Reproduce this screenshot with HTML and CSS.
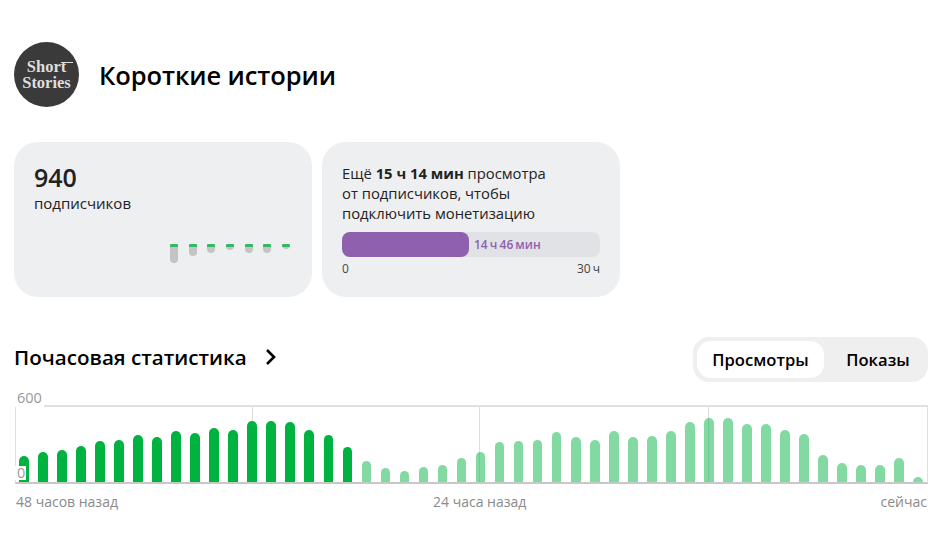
FILE: index.html
```html
<!DOCTYPE html>
<html lang="ru">
    <head>
        <title>Короткие истории</title>
        <meta charset="UTF-8">
        <link rel="stylesheet" href="styles.css">
    </head>
    <body>
        <div class="channel">
            <div class="logo"><span>Short</span><span>Stories</span></div>
            <h1>Короткие истории</h1>
        </div>

        <div class="cards">
            <div class="card subs">
                <div class="subs-count">940</div>
                <div class="subs-label">подписчиков</div>
                <div class="spark">
                    <div class="spark-bar" style="height: 19px"></div>
                    <div class="spark-bar" style="height: 12px"></div>
                    <div class="spark-bar" style="height: 9px"></div>
                    <div class="spark-bar" style="height: 6px"></div>
                    <div class="spark-bar" style="height: 9px"></div>
                    <div class="spark-bar" style="height: 9px"></div>
                    <div class="spark-bar" style="height: 5px"></div>
                </div>
            </div>
            <div class="card money">
                <p>Ещё <b>15 ч 14 мин</b> просмотра<br>от подписчиков, чтобы<br>подключить монетизацию</p>
                <div class="progress">
                    <div class="progress-fill" style="width: 127px"></div>
                    <span>14 ч 46 мин</span>
                </div>
                <div class="progress-scale"><span>0</span><span>30 ч</span></div>
            </div>
        </div>

        <div class="stats-head">
            <h2>Почасовая статистика
                <svg width="12" height="18" viewBox="0 0 12 18"><path d="M2 2l7 7-7 7" fill="none" stroke="#000" stroke-width="2.6"/></svg>
            </h2>
            <div class="tabs">
                <div class="tab active">Просмотры</div>
                <div class="tab">Показы</div>
            </div>
        </div>

        <div class="chart">
            <span class="y-label y-top">600</span>
            <span class="y-label y-zero">0</span>
            <i class="grid g1"></i><i class="grid g2"></i><i class="grid g3"></i>
            <div class="bars">
                <div class="bar" style="height: 26px"></div>
                <div class="bar" style="height: 30px"></div>
                <div class="bar" style="height: 32px"></div>
                <div class="bar" style="height: 36px"></div>
                <div class="bar" style="height: 41px"></div>
                <div class="bar" style="height: 42px"></div>
                <div class="bar" style="height: 47px"></div>
                <div class="bar" style="height: 45px"></div>
                <div class="bar" style="height: 51px"></div>
                <div class="bar" style="height: 49px"></div>
                <div class="bar" style="height: 54px"></div>
                <div class="bar" style="height: 52px"></div>
                <div class="bar" style="height: 61px"></div>
                <div class="bar" style="height: 61px"></div>
                <div class="bar" style="height: 60px"></div>
                <div class="bar" style="height: 52px"></div>
                <div class="bar" style="height: 47px"></div>
                <div class="bar" style="height: 35px"></div>
                <div class="bar light" style="height: 21px"></div>
                <div class="bar light" style="height: 14px"></div>
                <div class="bar light" style="height: 11px"></div>
                <div class="bar light" style="height: 15px"></div>
                <div class="bar light" style="height: 17px"></div>
                <div class="bar light" style="height: 24px"></div>
                <div class="bar light" style="height: 30px"></div>
                <div class="bar light" style="height: 40px"></div>
                <div class="bar light" style="height: 41px"></div>
                <div class="bar light" style="height: 42px"></div>
                <div class="bar light" style="height: 50px"></div>
                <div class="bar light" style="height: 45px"></div>
                <div class="bar light" style="height: 42px"></div>
                <div class="bar light" style="height: 51px"></div>
                <div class="bar light" style="height: 45px"></div>
                <div class="bar light" style="height: 46px"></div>
                <div class="bar light" style="height: 51px"></div>
                <div class="bar light" style="height: 60px"></div>
                <div class="bar light" style="height: 64px"></div>
                <div class="bar light" style="height: 64px"></div>
                <div class="bar light" style="height: 58px"></div>
                <div class="bar light" style="height: 58px"></div>
                <div class="bar light" style="height: 52px"></div>
                <div class="bar light" style="height: 48px"></div>
                <div class="bar light" style="height: 27px"></div>
                <div class="bar light" style="height: 19px"></div>
                <div class="bar light" style="height: 17px"></div>
                <div class="bar light" style="height: 17px"></div>
                <div class="bar light" style="height: 24px"></div>
                <div class="bar light" style="height: 5px"></div>
            </div>
        </div>
        <div class="x-labels">
            <span>48 часов назад</span>
            <span>24 часа назад</span>
            <span>сейчас</span>
        </div>
    </body>
</html>
```

FILE: styles.css
```css
body {
    margin: 0;
    padding: 42px 22px 0 14px;
    background: #fff;
    color: #000;
    font-family: "Open Sans", "Noto Sans", sans-serif;
}
.channel {
    display: flex;
    align-items: center;
    gap: 20px;
    height: 65px;
}
.logo {
    position: relative;
    width: 65px;
    height: 65px;
    border-radius: 50%;
    background: #3a3a3a;
    color: #dedede;
    display: flex;
    flex-direction: column;
    align-items: center;
    justify-content: center;
    font-family: "Liberation Serif", serif;
    font-weight: bold;
    font-size: 16.5px;
    line-height: 16px;
}
/* brush stroke off the t of Short */
.logo::after {
    content: "";
    position: absolute;
    top: 20px;
    left: 47px;
    width: 12px;
    height: 1px;
    background: #dedede;
}
h1 {
    margin: 0;
    font-size: 25.5px;
    font-weight: 600;
    letter-spacing: -0.1px;
}
.cards {
    display: flex;
    gap: 10px;
    margin-top: 35px;
}
.card {
    width: 298px;
    height: 155px;
    box-sizing: border-box;
    background: #eeeff1;
    border-radius: 24px;
    padding: 19px 20px;
    color: #222;
}
.subs-count {
    font-size: 25px;
    font-weight: 600;
    line-height: 32px;
}
.subs-label {
    font-size: 15px;
    line-height: 20px;
}
.spark {
    display: flex;
    gap: 10.67px;
    justify-content: flex-end;
    margin-top: 31px;
    padding-right: 2px;
}
.spark-bar {
    width: 8px;
    box-sizing: border-box;
    background: #c4c4c4;
    border-top: 3px solid #35b866;
    border-radius: 1px 1px 4px 4px;
}
.money { padding-top: 21px; }
.money p {
    margin: 0;
    font-size: 14.8px;
    line-height: 20px;
}
.money b { font-weight: 700; }
.progress {
    display: flex;
    align-items: center;
    gap: 5px;
    height: 25px;
    margin-top: 9px;
    background: #e1e2e6;
    border-radius: 8px;
    color: #8e60ae;
    font-size: 12px;
    font-weight: 600;
    word-spacing: -1px;
}
.progress-fill {
    height: 100%;
    background: #8e60ae;
    border-radius: 8px;
}
.progress-scale {
    display: flex;
    justify-content: space-between;
    margin-top: 4px;
    font-size: 12px;
    line-height: 16px;
    word-spacing: -1px;
    color: #444;
}
.stats-head {
    display: flex;
    justify-content: space-between;
    align-items: center;
    margin-top: 40px;
}
h2 {
    margin: 0 0 5px 0;
    font-size: 20.6px;
    font-weight: 600;
    display: flex;
    align-items: center;
    gap: 18px;
}
.tabs {
    display: flex;
    align-items: center;
    width: 235px;
    height: 45px;
    box-sizing: border-box;
    padding: 4px;
    background: #efefef;
    border-radius: 16px;
    font-size: 16.6px;
    font-weight: 600;
}
.tab {
    height: 37px;
    line-height: 37px;
    text-align: center;
    flex: 1;
    padding-left: 8px;
}
.tab.active {
    flex: none;
    width: 127px;
    padding-left: 0;
    background: #fff;
    border-radius: 14px;
}
.chart {
    position: relative;
    height: 75px;
    margin: 23px 0 0 1px;
    border: 1px solid #e0e0e0;
    border-top-width: 2px;
    border-bottom: 2px solid #c8c8c8;
}
.bars {
    position: relative;
    display: flex;
    justify-content: space-between;
    align-items: flex-end;
    height: 100%;
    padding: 0 3.5px 0 3px;
}
.bar {
    width: 9.6px;
    background: #00b341;
    border-radius: 5px 5px 0 0;
}
.bar.light { background: rgba(0, 179, 65, 0.49); }
.grid {
    position: absolute;
    top: 0;
    bottom: 0;
    width: 1px;
    background: #ddd;
}
.grid.g1 { left: 236px; }
.grid.g2 { left: 463px; }
.grid.g3 { left: 692px; }
.y-label {
    position: absolute;
    left: -1px;
    padding: 0 2px;
    background: #fff;
    color: #999;
    font-size: 14.5px;
    line-height: 14px;
    z-index: 1;
}
.y-top { top: -16px; padding-bottom: 2px; left: -1px; }
.y-zero { bottom: 2px; padding-right: 1px; }
.x-labels {
    display: grid;
    grid-template-columns: 417px 1fr auto;
    margin: 9px 1px 0 2px;
    font-size: 14px;
    line-height: 18px;
    color: #8a8a8a;
}
```
